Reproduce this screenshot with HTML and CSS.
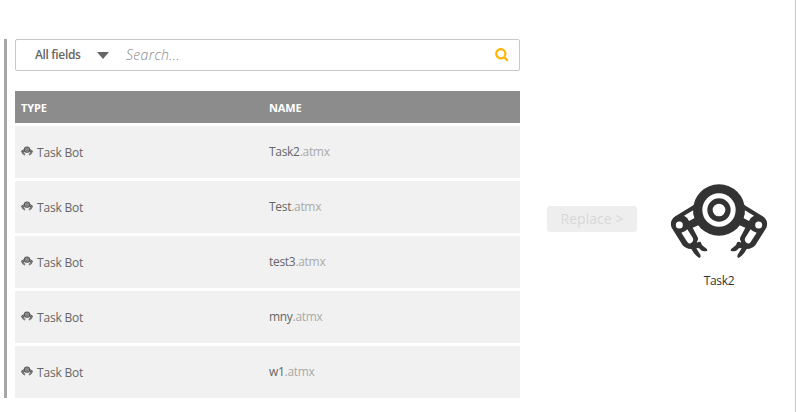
FILE: index.html
```html
<!DOCTYPE html>
<html lang="en">
<head>
<meta charset="utf-8">
<title>Replace task</title>
<link rel="stylesheet" href="styles.css">
</head>
<body>
<svg class="defs" width="0" height="0">
  <symbol id="bot" viewBox="30 24 294 228">
    <g id="arm">
      <path d="M106 87L46 124Q27 137 35 158L68 211Q74 219 85 221L94 222Q103 240 118 249Q124 248 121 239L109 220Q117 216 123 226Q131 231 142 227Q143 222 132 215Q124 210 122 201Q116 198 112 203L111 199Q116 194 113 187L98 158L124 147Z" fill="currentColor"/>
      <circle cx="58" cy="150" r="10.5" class="hole"/>
      <path d="M72 122L101 105Q98 118 104 129L87 138Q83 127 72 122Z" class="hole"/>
      <path d="M64 173Q76 171 82 163L99 190Q102 199 92 205Q86 207 82 201Z" class="hole"/>
    </g>
    <use href="#arm" transform="translate(354 0) scale(-1 1)"/>
    <circle cx="177" cy="105" r="77.5" fill="currentColor"/>
    <circle cx="177" cy="105" r="50" class="hole"/>
    <circle cx="177" cy="105" r="27" fill="none" stroke="currentColor" stroke-width="16"/>
  </symbol>
</svg>
<main class="page">
  <section class="picker">
    <div class="search">
      <span class="scope">All fields</span>
      <svg class="caret" viewBox="0 0 12 7"><path d="M0 0H12L6 7Z"/></svg>
      <span class="placeholder">Search...</span>
      <svg class="lens" viewBox="0 0 14 14"><circle cx="5.8" cy="5.8" r="4.6"/><path d="M9 9L12.8 12.8"/></svg>
    </div>
    <div class="head row"><span class="c-type">TYPE</span><span class="c-name">NAME</span></div>
    <div class="rows">
      <div class="row"><div class="type"><svg class="mini"><use href="#bot"/></svg><span class="label">Task Bot</span></div><div class="name">Task2<span>.atmx</span></div></div>
      <div class="row"><div class="type"><svg class="mini"><use href="#bot"/></svg><span class="label">Task Bot</span></div><div class="name">Test<span>.atmx</span></div></div>
      <div class="row"><div class="type"><svg class="mini"><use href="#bot"/></svg><span class="label">Task Bot</span></div><div class="name">test3<span>.atmx</span></div></div>
      <div class="row"><div class="type"><svg class="mini"><use href="#bot"/></svg><span class="label">Task Bot</span></div><div class="name">mny<span>.atmx</span></div></div>
      <div class="row"><div class="type"><svg class="mini"><use href="#bot"/></svg><span class="label">Task Bot</span></div><div class="name">w1<span>.atmx</span></div></div>
    </div>
  </section>
  <button class="replace" disabled><span>Replace &gt;</span></button>
  <figure class="task">
    <svg class="big"><use href="#bot"/></svg>
    <figcaption>Task2</figcaption>
  </figure>
</main>
</body>
</html>
```
FILE: styles.css
```css
* { box-sizing: border-box; }
body { margin: 0; background: #fff; font-family: "Open Sans", "Noto Sans", sans-serif; font-size: 12px; color: #666; --hole: #fff; }
.defs { display: block; }
.hole { fill: var(--hole); }
.page { display: flex; align-items: flex-start; height: 412px; padding-top: 39px; padding-left: 4px; border-right: 1px solid #c4c4c4; overflow: hidden; }
.picker { width: 516px; height: 359px; border-left: 3px solid #a6a6a6; padding-left: 8px; flex: none; }
.search { display: flex; align-items: center; height: 32px; border: 1px solid #c8c8c8; border-radius: 2px; padding: 0 10px 0 19px; white-space: nowrap; }
.scope { width: 62px; font-weight: 600; letter-spacing: -.35px; padding-bottom: 1px; }
.caret { width: 12px; height: 7px; fill: #666; }
.placeholder { margin-left: 17px; flex: 1; font-size: 14px; font-style: italic; font-weight: 300; letter-spacing: .35px; color: #888; padding-bottom: 1px; }
.lens { width: 14px; height: 14px; fill: none; stroke: #ffb400; stroke-width: 2.2; }
.row { display: flex; align-items: center; height: 52px; padding-left: 6px; background: #f1f1f1; white-space: nowrap; }
.head { height: 32px; margin-top: 20px; background: #8c8c8c; color: #fff; font-size: 11px; font-weight: 700; letter-spacing: -.1px; }
.rows { display: grid; gap: 3px; margin-top: 3px; }
.type, .c-type { width: 248px; }
.type { display: flex; align-items: center; gap: 4px; padding-top: 1px; }
.mini { width: 12px; height: 10px; margin-top: -3px; color: #555; --hole: #aaa; }
.label { letter-spacing: -.2px; }
.name { letter-spacing: -.3px; padding-bottom: 2px; }
.name span { color: #aaa; }
.replace { width: 90px; height: 26px; margin: 167px 0 0 27px; padding: 0 0 1px; border: 0; border-radius: 3px; background: #eee; color: #d8d8d8; font: 500 14px "Open Sans", sans-serif; letter-spacing: .05px; white-space: nowrap; }
.task { width: 98px; margin: 144px 0 0 33px; text-align: center; color: #333; flex: none; }
.big { display: block; width: 98px; height: 76px; }
figcaption { margin-top: 13px; line-height: 18px; letter-spacing: -.3px; }
```
